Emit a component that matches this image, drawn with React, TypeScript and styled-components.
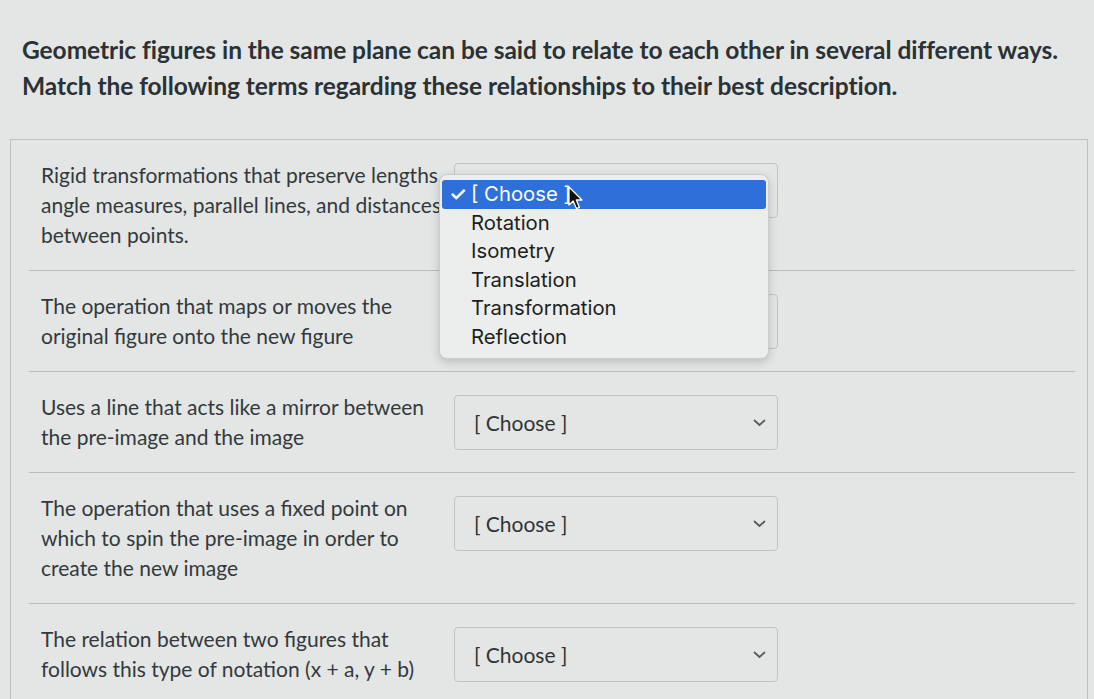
import React from 'react';
import styled, { createGlobalStyle } from 'styled-components';

const GlobalStyle = createGlobalStyle`
  html, body {
    margin: 0;
    padding: 0;
    background: #e3e6e4;
  }
  body {
    font-family: 'Lato', 'Liberation Sans', sans-serif;
    color: #2d3b45;
    overflow: hidden;
  }
`;

const Page = styled.div`
  width: 1094px;
  height: 699px;
  overflow: hidden;
`;

const Heading = styled.div`
  padding: 32px 0 0 22px;
  font-size: 24.5px;
  font-weight: 700;
  line-height: 36px;
  color: #2b3135;
  letter-spacing: -0.05px;
  white-space: nowrap;
`;

const QuestionBox = styled.div`
  margin: 35px 6px 0 10px;
  border: 1px solid #bcc0be;
  border-bottom: none;
  height: 560px;
`;

const MatchRow = styled.div`
  display: flex;
  align-items: flex-start;
  margin: 0 12px 0 18px;
  padding: 20px 0 20px 12px;

  & + & {
    border-top: 1px solid #b8bcba;
  }
`;

const Prompt = styled.div`
  width: 408px;
  font-size: 21px;
  line-height: 30px;
  color: #33393d;
`;

const SelectWrap = styled.div<{ $open?: boolean }>`
  position: relative;
  margin-left: 5px;
  margin-top: 3px;
  z-index: ${p => (p.$open ? 2 : 1)};
`;

const SelectBox = styled.div`
  box-sizing: border-box;
  width: 324px;
  height: 55px;
  border: 1px solid #bfc4c2;
  border-radius: 4px;
  display: flex;
  align-items: center;
  justify-content: space-between;
  padding: 0 11px 0 19px;
  font-size: 21px;
  color: #2f3437;
`;

const Dropdown = styled.div`
  position: absolute;
  left: -15px;
  top: 11px;
  width: 330px;
  box-sizing: border-box;
  padding: 5px 2px 7px;
  background: #eceeed;
  border: 1px solid #c9cccb;
  border-radius: 8px;
  box-shadow: 0 3px 10px rgba(0, 0, 0, 0.18);
  font-family: 'Inter', 'Noto Sans', sans-serif;
`;

const Option = styled.div<{ $active?: boolean }>`
  position: relative;
  height: 28.5px;
  line-height: 28.5px;
  padding-left: 29px;
  font-size: 20.3px;
  color: ${p => (p.$active ? '#ffffff' : '#1d1f20')};
  background: ${p => (p.$active ? '#2f6fd9' : 'transparent')};
  border-radius: 3px;
`;

const Check = styled.span`
  position: absolute;
  left: 7px;
  top: 0;
  font-size: 20px;
  font-weight: 600;
`;

const Cursor = styled.svg`
  position: absolute;
  left: 128px;
  top: 11px;
`;

const Chevron = () => (
  <svg width="13" height="8" viewBox="0 0 13 8">
    <path d="M1.5 1.5 L6.5 6 L11.5 1.5" fill="none" stroke="#55595c" strokeWidth="1.7" strokeLinecap="round" />
  </svg>
);

const options = ['Rotation', 'Isometry', 'Translation', 'Transformation', 'Reflection'];

const rows = [
  'Rigid transformations that preserve lengths, angle measures, parallel lines, and distances between points.',
  'The operation that maps or moves the original figure onto the new figure',
  'Uses a line that acts like a mirror between the pre-image and the image',
  'The operation that uses a fixed point on which to spin the pre-image in order to create the new image',
  'The relation between two figures that follows this type of notation (x + a, y + b)',
];

const App: React.FC = () => {
  return (
    <>
      <GlobalStyle />
      <Page>
        <Heading>
          Geometric figures in the same plane can be said to relate to each other in several different ways.
          <br />
          Match the following terms regarding these relationships to their best description.
        </Heading>

        <QuestionBox>
          {rows.map((text, i) => (
            <MatchRow key={i}>
              <Prompt>{text}</Prompt>
              <SelectWrap $open={i === 0}>
                <SelectBox>
                  <span>[ Choose ]</span>
                  <Chevron />
                </SelectBox>
                {i === 0 && (
                  <Dropdown>
                    <Option $active>
                      <Check>✓</Check>[ Choose ]
                    </Option>
                    {options.map(o => (
                      <Option key={o}>{o}</Option>
                    ))}
                    <Cursor width="16" height="25" viewBox="0 0 16 25">
                      <path
                        d="M1 1 L1 19 L5.2 15 L8.4 22.6 L11.4 21.3 L8.3 14 L14 14 Z"
                        fill="#111"
                        stroke="#fff"
                        strokeWidth="1.3"
                        strokeLinejoin="round"
                      />
                    </Cursor>
                  </Dropdown>
                )}
              </SelectWrap>
            </MatchRow>
          ))}
        </QuestionBox>
      </Page>
    </>
  );
};

export default App;
